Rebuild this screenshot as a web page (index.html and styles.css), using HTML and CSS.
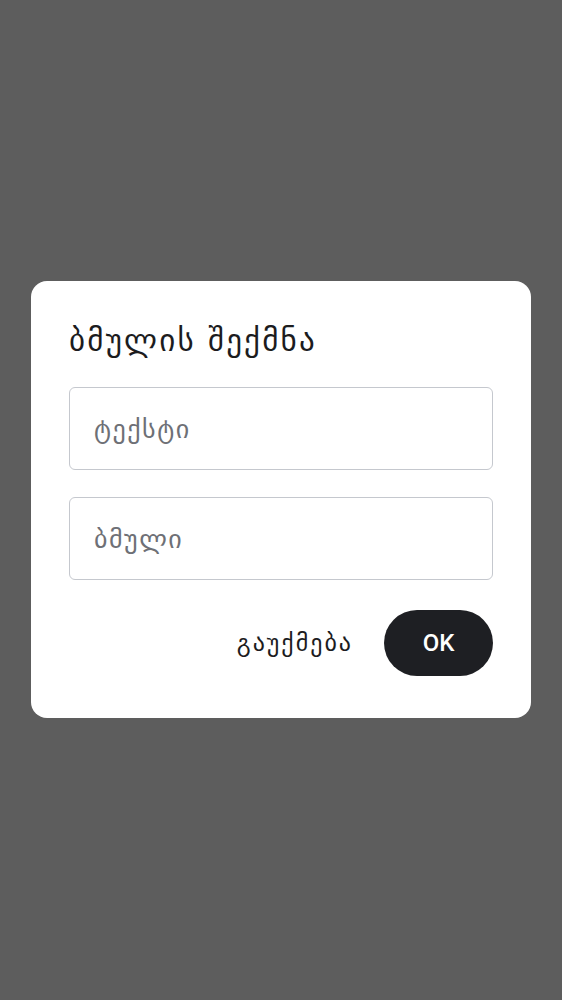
FILE: index.html
```html
<!DOCTYPE html>
<html lang="ka">
<head>
<meta charset="utf-8">
<link rel="stylesheet" href="styles.css">
</head>
<body>
<div class="overlay">
  <div class="dialog">
    <h1 class="title">ბმულის შექმნა</h1>
    <div class="field"><span class="placeholder">ტექსტი</span></div>
    <div class="field"><span class="placeholder">ბმული</span></div>
    <div class="actions">
      <button class="btn-text">გაუქმება</button>
      <button class="btn-ok">OK</button>
    </div>
  </div>
</div>
</body>
</html>
```
FILE: styles.css
```css
html, body {
  margin: 0;
  padding: 0;
  height: 100%;
}
body {
  background: #5d5d5d;
  font-family: "DejaVu Sans", "Noto Sans", sans-serif;
}
.overlay {
  height: 1000px;
  box-sizing: border-box;
  padding-top: 281px;
  display: flex;
  align-items: flex-start;
  justify-content: center;
}
.dialog {
  width: 500px;
  box-sizing: border-box;
  background: #ffffff;
  border-radius: 16px;
  padding: 37px 38px 42px 38px;
  display: flex;
  flex-direction: column;
}
.title {
  margin: 0 0 25px 0;
  font-size: 31px;
  font-weight: 400;
  letter-spacing: 2.2px;
  line-height: 44px;
  color: #1c1c1e;
}
.field {
  height: 83px;
  box-sizing: border-box;
  border: 1.5px solid #c5c8ce;
  border-radius: 6px;
  display: flex;
  align-items: center;
  padding: 0 24px;
  margin-bottom: 27px;
}
.field + .field {
  margin-bottom: 30px;
}
.placeholder {
  font-size: 26px;
  letter-spacing: 1.5px;
  color: #6e7076;
}
.actions {
  display: flex;
  justify-content: flex-end;
  align-items: center;
  gap: 31px;
}
.btn-text {
  background: none;
  border: none;
  padding: 0;
  font-family: "DejaVu Sans", "Noto Sans", sans-serif;
  font-size: 24px;
  letter-spacing: 2px;
  color: #1c1c1e;
}
.btn-ok {
  width: 109px;
  height: 66px;
  border: none;
  border-radius: 33px;
  background: #1e1f23;
  color: #ffffff;
  font-family: Roboto, "Noto Sans", sans-serif;
  font-size: 24px;
  font-weight: 500;
}
```
